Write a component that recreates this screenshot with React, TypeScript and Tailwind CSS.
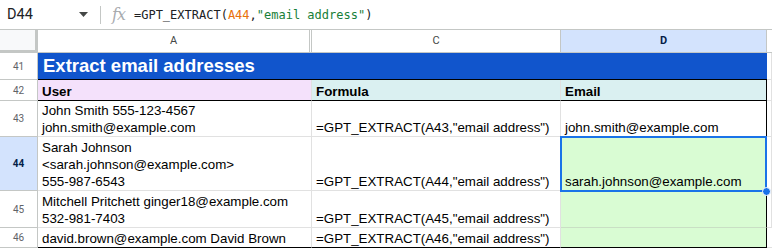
const sans = "font-['Liberation_Sans',Arial,sans-serif]";
const grid = "border-r border-b border-[#e1e1e1]";

const RowNum = ({ n, active = false }: { n: number; active?: boolean }) => (
  <div
    className={`flex items-center justify-center border-r border-b border-[#c4c7c5] font-['Roboto',sans-serif] text-[10px] ${
      active ? "bg-[#d3e3fd] font-bold text-[#041e49]" : "bg-white text-[#5f6368]"
    }`}
  >
    {n}
  </div>
);

const Cell = ({ children, className = "" }: { children?: React.ReactNode; className?: string }) => (
  <div className={`flex flex-col justify-end px-[4px] text-[13.33px] leading-[17px] text-black whitespace-nowrap overflow-hidden ${className}`}>
    {children}
  </div>
);

const formula = (r: number) => `=GPT_EXTRACT(A${r},"email address")`;

export default function App() {
  return (
    <div className={`w-[772px] h-[249px] overflow-hidden bg-white ${sans}`}>
      {/* formula bar */}
      <div className="flex h-[30px] items-center border-b border-[#c4c7c5]">
        <div className="w-[72px] pl-[7px] font-['Roboto',sans-serif] text-[14.5px] text-[#202124]">D44</div>
        <svg width="9" height="5" viewBox="0 0 9 5" className="ml-[7px]">
          <path d="M0 0h9L4.5 5z" fill="#444746" />
        </svg>
        <div className="ml-[12px] h-[18px] w-px bg-[#c4c7c5]" />
        <span className="ml-[11px] font-['DejaVu_Serif',serif] text-[16px] italic text-[#a8abaf] tracking-[-1px]">fx</span>
        <div className="ml-[9px] font-['DejaVu_Sans_Mono',monospace] text-[12px] text-[#202124]">
          =GPT_EXTRACT(<span className="text-[#e8710a]">A44</span>,<span className="text-[#188038]">"email address"</span>)
        </div>
      </div>

      <div className="grid grid-cols-[38px_274px_249px_206px_5px] grid-rows-[23px_27px_21px_36px_54px_37px_20px]">
        {/* column headers */}
        <div className="border-r-[3px] border-b-[3px] border-[#c4c7c5] bg-[#f8f9fa]" />
        <div className="flex items-center justify-center border-r-[3px] border-double border-b border-[#c4c7c5] bg-white font-['Roboto',sans-serif] text-[11px] text-[#444746]">
          A
        </div>
        <div className="flex items-center justify-center border-r border-b border-[#c4c7c5] bg-white font-['Roboto',sans-serif] text-[11px] text-[#444746]">
          C
        </div>
        <div className="flex items-center justify-center border-r border-b border-[#c4c7c5] bg-[#d3e3fd] font-['Roboto',sans-serif] text-[11px] font-bold text-[#041e49]">
          D
        </div>
        <div className="border-b border-[#c4c7c5] bg-white" />

        {/* 41 */}
        <RowNum n={41} />
        <div className="col-span-3 flex items-center border-b border-black bg-[#1155cc] pl-[5px] text-[18.5px] font-bold text-white">
          Extract email addresses
        </div>
        <div className={grid} />

        {/* 42 */}
        <RowNum n={42} />
        <Cell className="border-r border-[#e1e1e1] border-b border-b-black bg-[#f4e1fb] font-bold">User</Cell>
        <Cell className="border-r border-[#e1e1e1] border-b border-b-black bg-[#daf0f1] font-bold">Formula</Cell>
        <Cell className="border-r border-b border-black bg-[#daf0f1] font-bold">Email</Cell>
        <div className={grid} />

        {/* 43 */}
        <RowNum n={43} />
        <Cell className={grid}>
          <span>John Smith 555-123-4567</span>
          <span>john.smith@example.com</span>
        </Cell>
        <Cell className={grid}>{formula(43)}</Cell>
        <Cell className="border-b border-[#e1e1e1] border-r border-r-black">john.smith@example.com</Cell>
        <div className={grid} />

        {/* 44 */}
        <RowNum n={44} active />
        <Cell className={grid}>
          <span>Sarah Johnson</span>
          <span>&lt;sarah.johnson@example.com&gt;</span>
          <span>555-987-6543</span>
        </Cell>
        <Cell className={grid}>{formula(44)}</Cell>
        <div className="relative -mt-px mb-[-1px] -ml-px flex flex-col justify-end border-2 border-[#1a73e8] bg-[#d9fcd3] px-[3px] text-[13.33px] leading-[17px] text-black">
          sarah.johnson@example.com
          <div className="absolute -right-[6px] -bottom-[6px] h-[9px] w-[9px] rounded-full border border-white bg-[#1a73e8]" />
        </div>
        <div className={grid} />

        {/* 45 */}
        <RowNum n={45} />
        <Cell className={grid}>
          <span>Mitchell Pritchett ginger18@example.com</span>
          <span>532-981-7403</span>
        </Cell>
        <Cell className={grid}>{formula(45)}</Cell>
        <Cell className="border-b border-[#c9dfc4] border-r border-r-black bg-[#d9fcd3]" />
        <div className={grid} />

        {/* 46 */}
        <RowNum n={46} />
        <Cell className="border-r border-[#e1e1e1] border-b border-b-black">david.brown@example.com David Brown</Cell>
        <Cell className="border-r border-[#e1e1e1] border-b border-b-black">{formula(46)}</Cell>
        <Cell className="border-r border-b border-black bg-[#d9fcd3]" />
        <div className="border-b border-[#e1e1e1]" />
      </div>
    </div>
  );
}
